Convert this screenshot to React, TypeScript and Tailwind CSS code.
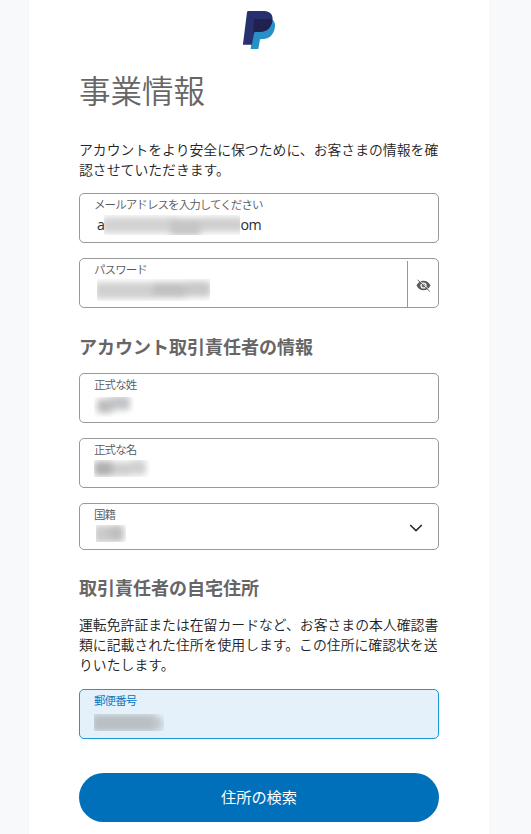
import type { ReactNode } from 'react';

type Blot = { x: number; y: number; w: number; h: number; tone: string };

// Redacted value: soft grey patches clipped to the area of the text
const Redacted = ({ blots, className }: { blots: Blot[]; className: string }) => (
  <svg className={`block shrink-0 ${className}`} aria-hidden="true">
    <g style={{ filter: 'blur(3px)' }}>
      {blots.map((b, i) => (
        <rect key={i} x={b.x} y={b.y} width={b.w} height={b.h} rx="3" fill={b.tone} />
      ))}
    </g>
  </svg>
);

type FieldProps = {
  label: string;
  className?: string;
  active?: boolean;
  trailing?: ReactNode;
  children: ReactNode;
};

const Field = ({ label, className = 'h-[50px]', active = false, trailing, children }: FieldProps) => (
  <div
    className={`flex overflow-hidden rounded-[5px] border ${className} ${
      active ? 'border-[#1b9ad6] bg-[#e4f0fa]' : 'border-[#97999b] bg-white'
    }`}
  >
    <div className="min-w-0 flex-1 pl-[14px]">
      <p
        className={`pt-[3px] text-[11.5px] leading-[15px] font-[350] tracking-[-0.92px] ${
          active ? 'text-[#0070ba]' : 'text-[#55575a]'
        }`}
      >
        {label}
      </p>
      {children}
    </div>
    {trailing}
  </div>
);

const Logo = () => (
  <svg width="34" height="40" viewBox="0 0 34 40" aria-label="PayPal">
    <path
      d="M13 9h16.500c2.800 1.800 4 4.700 3.400 8.200C31.800 24.700 27.200 29 21 29h-1.600c-.8 0-1.300.5-1.500 1.300L16.300 38.900H8.600z"
      fill="#2790c8"
    />
    <path
      d="M6.300 1h14.600c7 0 10.500 3.300 9.500 9.500-1.200 7.800-6.400 11.500-13.400 11.500h-3.300c-.9 0-1.400.5-1.600 1.300L9.900 34.700H.9L5 2.200C5.200 1.400 5.600 1 6.300 1z"
      fill="#27316f"
    />
    <path
      d="M13.300 9h15.400c.7.300 1.300.7 1.800 1.200C29.400 18.200 24.200 22 17 22h-4.200c-.6 0-1.100.2-1.500.7L11.900 10.300c.1-.8.600-1.300 1.400-1.300z"
      fill="#20214f"
    />
  </svg>
);

const EyeOff = () => (
  <svg width="15" height="13" viewBox="0 0 15 13" fill="none" aria-hidden="true">
    <path
      fillRule="evenodd"
      d="M.5 6.500C2 3.400 4.400 1.700 7.500 1.700s5.500 1.700 7 4.800c-1.500 3.100-3.900 4.800-7 4.800S2 9.600.5 6.500zm7-3.100a3.100 3.100 0 1 0 0 6.200 3.100 3.100 0 0 0 0-6.200z"
      fill="#5b5b5b"
    />
    <circle cx="7.500" cy="6.500" r="1.900" fill="#777" />
    <path d="M2.900.9l10.800 10.300" stroke="#fff" strokeWidth="0.800" />
    <path d="M1.700.9l12 11.500" stroke="#5b5b5b" strokeWidth="1" />
  </svg>
);

const emailBlots = [
  { x: -2, y: 2, w: 76, h: 16, tone: '#d2d2d2' },
  { x: 66, y: 3, w: 31, h: 18, tone: '#c6c6c6' },
  { x: 96, y: 2, w: 44, h: 15, tone: '#cfcfcf' },
];
const passwordBlots = [
  { x: -2, y: 3, w: 60, h: 17, tone: '#d0d0d0' },
  { x: 56, y: 3, w: 34, h: 16, tone: '#c1c1c1' },
  { x: 88, y: 2, w: 26, h: 16, tone: '#c9c9c9' },
];
const lastNameBlots = [
  { x: 3, y: 2, w: 16, h: 14, tone: '#bcbcbc' },
  { x: 16, y: -1, w: 20, h: 14, tone: '#c2c4c8' },
];
const firstNameBlots = [
  { x: 0, y: 1, w: 19, h: 15, tone: '#b0b0b0' },
  { x: 18, y: 2, w: 19, h: 14, tone: '#cecece' },
  { x: 36, y: 0, w: 16, h: 15, tone: '#d0d0d0' },
];
const countryBlots = [
  { x: -2, y: 0, w: 16, h: 18, tone: '#cbcbcb' },
  { x: 13, y: 0, w: 15, h: 17, tone: '#bfbfbf' },
];
const postalBlots = [
  { x: -2, y: 0, w: 64, h: 18, tone: '#b9bfc4' },
  { x: 60, y: 3, w: 9, h: 14, tone: '#c2cad0' },
];

const App = () => {
  return (
    <div className="h-[834px] overflow-hidden bg-[#f7f9fb] pl-[29px] font-['Noto_Sans_CJK_JP','Noto_Sans',sans-serif]">
      <main className="h-full w-[460px] bg-white px-[50px]">
        <div className="flex justify-center pt-[10px]">
          <Logo />
        </div>

        <h1 className="mt-[17px] text-[31.5px] leading-[44px] font-[350] text-[#666]">事業情報</h1>

        <p className="mt-[28px] text-[13.85px] leading-5 font-[350] whitespace-nowrap text-[#222]">
          アカウントをより安全に保つために、お客さまの情報を確
          <br />
          認させていただきます。
        </p>

        <div className="mt-[14px] flex flex-col gap-[15px]">
          <Field label="メールアドレスを入力してください">
            <div className="mt-[2px] flex h-[21px] items-center pl-[3px] font-['Open_Sans',sans-serif] text-[14.2px] tracking-[-0.4px] text-[#2c2e2f]">
              <span>a</span>
              <Redacted blots={emailBlots} className="h-5 w-[136px]" />
              <span>om</span>
            </div>
          </Field>
          <Field
            label="パスワード"
            trailing={
              <button
                type="button"
                className="mt-[2px] flex w-[31px] items-center justify-center border-l border-[#97999b] pt-[2px]"
              >
                <EyeOff />
              </button>
            }
          >
            <Redacted blots={passwordBlots} className="ml-[3px] mt-[2px] h-[22px] w-[113px]" />
          </Field>
        </div>

        <h2 className="mt-[25px] text-[18px] leading-[26px] font-bold text-[#666]">
          アカウント取引責任者の情報
        </h2>

        <div className="mt-[14px] flex flex-col gap-[15px]">
          <Field label="正式な姓">
            <Redacted blots={lastNameBlots} className="mt-[5px] h-5 w-10" />
          </Field>
          <Field label="正式な名">
            <Redacted blots={firstNameBlots} className="mt-[3px] h-[17px] w-[56px]" />
          </Field>
          <Field
            label="国籍"
            className="h-[47px]"
            trailing={
              <svg
                width="14"
                height="10"
                viewBox="0 0 14 10"
                className="mt-[2px] mr-[15px] self-center"
                fill="none"
                stroke="#2c2e2f"
                strokeWidth="1.600"
                aria-hidden="true"
              >
                <path d="M1.200 2l5.800 5.600L12.800 2" />
              </svg>
            }
          >
            <Redacted blots={countryBlots} className="ml-[2px] mt-[3px] h-[17px] w-[30px]" />
          </Field>
        </div>

        <h2 className="mt-[24px] text-[18px] leading-[26px] font-bold text-[#666]">
          取引責任者の自宅住所
        </h2>
        <p className="mt-[14px] text-[13.85px] leading-5 font-[350] whitespace-nowrap text-[#222]">
          運転免許証または在留カードなど、お客さまの本人確認書
          <br />
          類に記載された住所を使用します。この住所に確認状を送
          <br />
          りいたします。
        </p>

        <div className="mt-[15px]">
          <Field label="郵便番号" active>
            <Redacted blots={postalBlots} className="mt-[6px] h-[17px] w-[70px]" />
          </Field>
        </div>

        <button
          type="button"
          className="mt-[34px] flex h-[49px] w-full items-center justify-center rounded-full bg-[#0070ba] pb-[2px] text-[15.2px] text-white"
        >
          住所の検索
        </button>
      </main>
    </div>
  );
};

export default App;
